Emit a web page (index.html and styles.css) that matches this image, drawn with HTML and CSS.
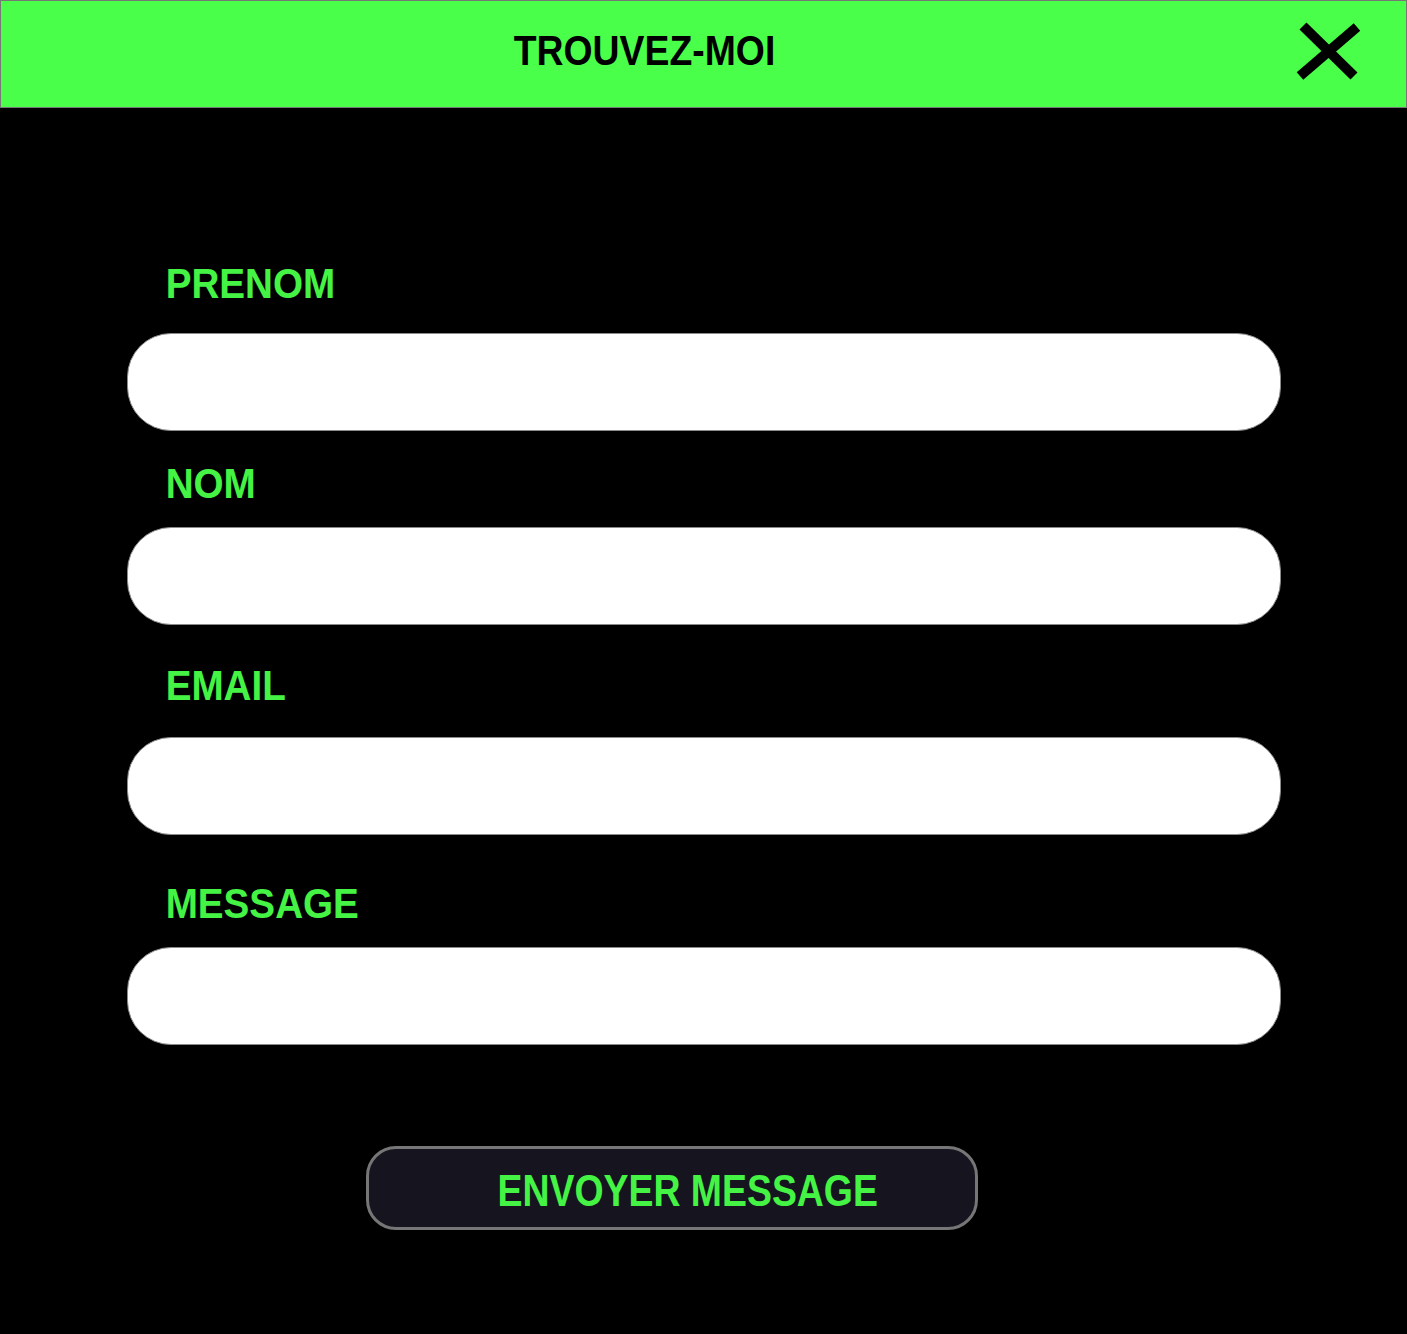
FILE: index.html
```html
<!DOCTYPE html>
<html lang="fr">
<head>
<meta charset="utf-8">
<title>Trouvez-moi</title>
<link rel="stylesheet" href="styles.css">
</head>
<body>
<header class="topbar">
  <h1 class="topbar__title">TROUVEZ-MOI</h1>
  <button class="topbar__close" type="button" aria-label="Fermer">
    <svg viewBox="0 0 66 62" width="66" height="62" aria-hidden="true">
      <line x1="9" y1="6" x2="60" y2="56" stroke="#000" stroke-width="10"/>
      <line x1="63" y1="7" x2="6" y2="56" stroke="#000" stroke-width="10"/>
    </svg>
  </button>
</header>
<main class="contact">
  <form class="contact__form">
    <div class="field field--first">
      <label class="field__label" for="prenom">PRENOM</label>
      <input class="field__input" id="prenom" type="text">
    </div>
    <div class="field field--second">
      <label class="field__label" for="nom">NOM</label>
      <input class="field__input" id="nom" type="text">
    </div>
    <div class="field field--third">
      <label class="field__label" for="email">EMAIL</label>
      <input class="field__input" id="email" type="email">
    </div>
    <div class="field field--fourth">
      <label class="field__label" for="message">MESSAGE</label>
      <input class="field__input" id="message" type="text">
    </div>
    <button class="contact__send" type="submit"><span class="contact__send-text">ENVOYER MESSAGE</span></button>
  </form>
</main>
</body>
</html>
```

FILE: styles.css
```css
html, body {
  margin: 0;
  padding: 0;
  background: #000;
}

body {
  font-family: "Liberation Sans", Arial, sans-serif;
  width: 1407px;
  min-height: 1334px;
}

.topbar {
  box-sizing: border-box;
  height: 108px;
  display: flex;
  align-items: center;
  background: #4aff4a;
  border: 1px solid #777;
  padding-bottom: 6px;
}

.topbar__title {
  flex: 1;
  margin: 0;
  text-align: center;
  font-size: 42px;
  line-height: 48px;
  font-weight: 700;
  color: #000;
  transform: scaleX(0.89);
}

.topbar__close {
  width: 66px;
  height: 62px;
  margin: 0 46px 0 6px;
  padding: 0;
  border: 0;
  background: transparent;
  display: flex;
}

.contact__form {
  width: 1154px;
  margin: 0 auto;
  padding-top: 152px;
  display: flex;
  flex-direction: column;
}

.field {
  display: flex;
  flex-direction: column;
}

.field__label {
  display: block;
  padding-left: 42px;
  font-size: 42px;
  line-height: 48px;
  font-weight: 700;
  color: #45f345;
  transform: scaleX(0.92);
  transform-origin: left center;
}

.field__input {
  box-sizing: border-box;
  display: block;
  width: 100%;
  height: 98px;
  margin: 0;
  border: 1px solid #8a8a8a;
  border-radius: 44px;
  background: #fff;
  outline: none;
}

.field--first .field__label { margin-bottom: 25px; }
.field--second { margin-top: 29px; }
.field--second .field__label { margin-bottom: 19px; }
.field--third { margin-top: 37px; }
.field--third .field__label { margin-bottom: 27px; }
.field--fourth { margin-top: 45px; }
.field--fourth .field__label { margin-bottom: 19px; }

.contact__send {
  box-sizing: border-box;
  align-self: flex-start;
  width: 612px;
  height: 84px;
  margin: 101px 0 0 239px;
  padding: 6px 0 0 32px;
  border: 3px solid #767676;
  border-radius: 30px;
  background: #15141f;
  font-family: "Liberation Sans", Arial, sans-serif;
  display: flex;
  align-items: center;
  justify-content: center;
}

.contact__send-text {
  display: inline-block;
  font-size: 44px;
  line-height: 48px;
  font-weight: 700;
  color: #45f345;
  transform: scaleX(0.85);
  white-space: nowrap;
}
```
